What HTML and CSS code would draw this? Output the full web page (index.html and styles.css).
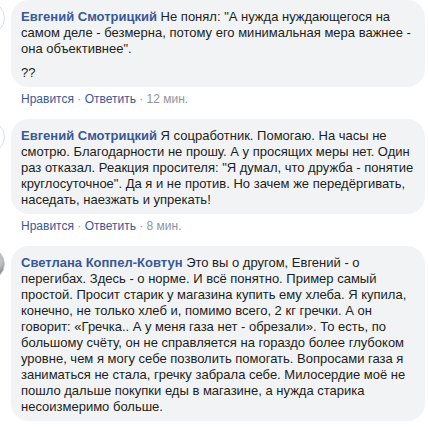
FILE: index.html
```html
<!DOCTYPE html>
<html lang="ru">
<head>
<meta charset="utf-8">
<link rel="stylesheet" href="styles.css">
</head>
<body>
<div class="thread">
  <div class="comment">
    <div class="avatar avatar-empty"></div>
    <div class="body">
      <div class="bubble">
        <p><a class="name">Евгений Смотрицкий</a> Не понял: "А нужда нуждающегося на самом деле - безмерна, потому его минимальная мера важнее - она объективнее".</p>
        <p>??</p>
      </div>
      <div class="actions"><a>Нравится</a> · <a>Ответить</a> · <span class="time">12 мин.</span></div>
    </div>
  </div>
  <div class="comment">
    <div class="avatar avatar-empty"></div>
    <div class="body">
      <div class="bubble">
        <p><a class="name">Евгений Смотрицкий</a> Я соцработник. Помогаю. На часы не смотрю. Благодарности не прошу. А у просящих меры нет. Один раз отказал. Реакция просителя: "Я думал, что дружба - понятие круглосуточное". Да я и не против. Но зачем же передёргивать, наседать, наезжать и упрекать!</p>
      </div>
      <div class="actions"><a>Нравится</a> · <a>Ответить</a> · <span class="time">8 мин.</span></div>
    </div>
  </div>
  <div class="comment">
    <div class="avatar avatar-photo"></div>
    <div class="body">
      <div class="bubble">
        <p><a class="name">Светлана Коппел-Ковтун</a> Это вы о другом, Евгений - о перегибах. Здесь - о норме. И всё понятно. Пример самый простой. Просит старик у магазина купить ему хлеба. Я купила, конечно, не только хлеб и, помимо всего, 2 кг гречки. А он говорит: «Гречка.. А у меня газа нет - обрезали». То есть, по большому счёту, он не справляется на гораздо более глубоком уровне, чем я могу себе позволить помогать. Вопросами газа я заниматься не стала, гречку забрала себе. Милосердие моё не пошло дальше покупки еды в магазине, а нужда старика несоизмеримо больше.</p>
      </div>
      <div class="actions"><a>Нравится</a> · <a>Ответить</a> · <span class="time">5 мин.</span></div>
    </div>
  </div>
</div>
</body>
</html>
```
FILE: styles.css
```css
* { box-sizing: border-box; }
html, body { margin: 0; padding: 0; background: #fff; }
body {
  font-family: "Liberation Sans", Arial, sans-serif;
  color: #1c1e21;
  overflow: hidden;
}
.thread {
  display: flex;
  flex-direction: column;
  gap: 12px;
  margin-left: -27px;
  padding-top: 0;
}
.comment {
  display: flex;
  gap: 6px;
  align-items: flex-start;
}
.avatar {
  flex: 0 0 32px;
  width: 32px;
  height: 32px;
  border-radius: 50%;
  margin-top: 2px;
}
.avatar-empty { background: #fff; border: 1px solid #dadde1; }
.avatar-photo { background: radial-gradient(circle at 70% 40%, #bfbfbf 0 25%, #8d8d8d 45%, #d8d8d8 70%); border: 1px solid #c9ccd1; }
.body { flex: 1; min-width: 0; margin-right: 3px; }
.bubble {
  background: #f2f3f5;
  border-radius: 18px;
  padding: 9px 10px 6px 10px;
  font-size: 13px;
  line-height: 16px;
}
.bubble p { margin: 0 0 8px 0; }
.bubble p:last-child { margin-bottom: 0; }
.name { color: #385898; font-weight: bold; }
.actions {
  font-size: 12px;
  line-height: 16px;
  color: #90949c;
  padding: 4px 10px 0;
}
.actions a { color: #385898; }
.time { color: #90949c; }
```
